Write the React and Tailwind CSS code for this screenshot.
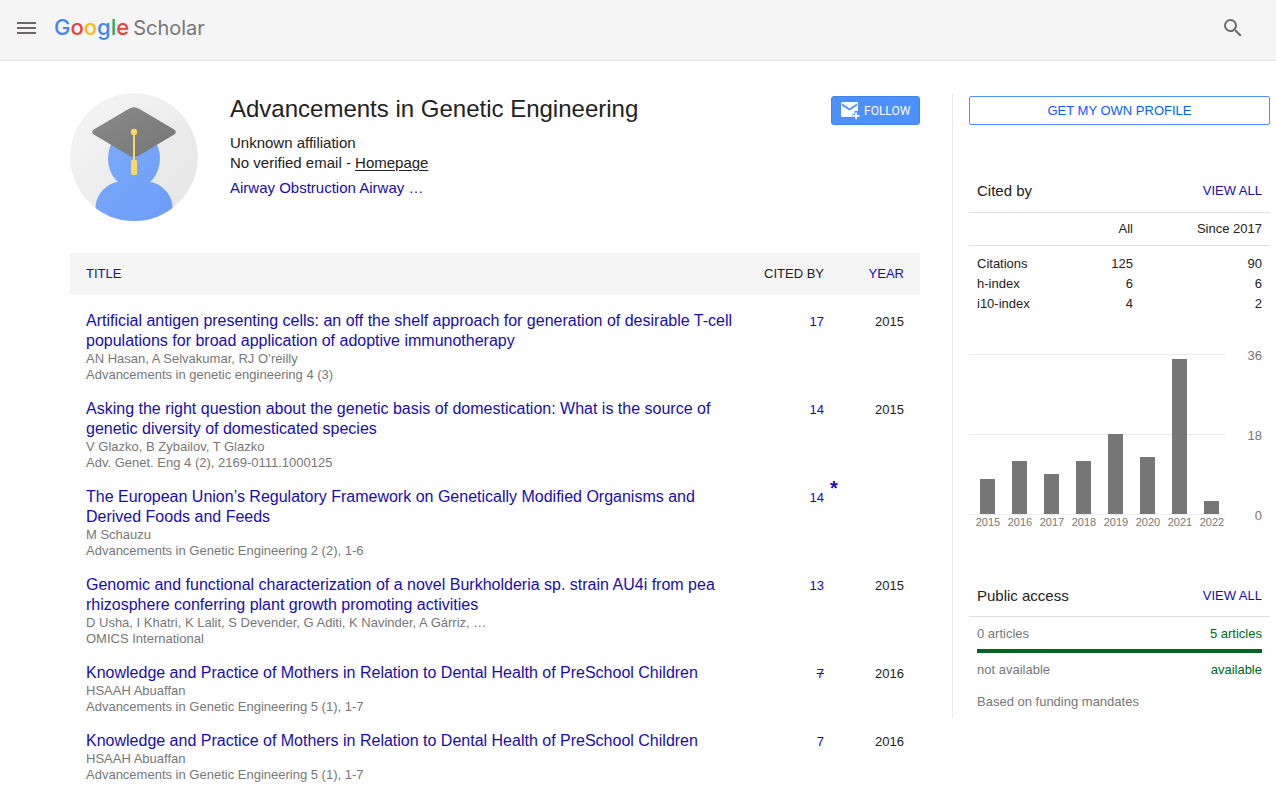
const articles = [
  {
    title: 'Artificial antigen presenting cells: an off the shelf approach for generation of desirable T-cell populations for broad application of adoptive immunotherapy',
    authors: 'AN Hasan, A Selvakumar, RJ O’reilly',
    venue: 'Advancements in genetic engineering 4 (3)',
    cited: 17,
    year: 2015,
  },
  {
    title: 'Asking the right question about the genetic basis of domestication: What is the source of genetic diversity of domesticated species',
    authors: 'V Glazko, B Zybailov, T Glazko',
    venue: 'Adv. Genet. Eng 4 (2), 2169-0111.1000125',
    cited: 14,
    year: 2015,
  },
  {
    title: 'The European Union’s Regulatory Framework on Genetically Modified Organisms and Derived Foods and Feeds',
    authors: 'M Schauzu',
    venue: 'Advancements in Genetic Engineering 2 (2), 1-6',
    cited: 14,
    merged: true,
    year: '',
  },
  {
    title: 'Genomic and functional characterization of a novel Burkholderia sp. strain AU4i from pea rhizosphere conferring plant growth promoting activities',
    authors: 'D Usha, I Khatri, K Lalit, S Devender, G Aditi, K Navinder, A Gárriz, …',
    venue: 'OMICS International',
    cited: 13,
    year: 2015,
  },
  {
    title: 'Knowledge and Practice of Mothers in Relation to Dental Health of PreSchool Children',
    authors: 'HSAAH Abuaffan',
    venue: 'Advancements in Genetic Engineering 5 (1), 1-7',
    cited: 7,
    struck: true,
    year: 2016,
  },
  {
    title: 'Knowledge and Practice of Mothers in Relation to Dental Health of PreSchool Children',
    authors: 'HSAAH Abuaffan',
    venue: 'Advancements in Genetic Engineering 5 (1), 1-7',
    cited: 7,
    year: 2016,
  },
];

const stats = [
  ['Citations', 125, 90],
  ['h-index', 6, 6],
  ['i10-index', 4, 2],
];

const citationsPerYear = [
  [2015, 35],
  [2016, 53],
  [2017, 40],
  [2018, 53],
  [2019, 80],
  [2020, 57],
  [2021, 155],
  [2022, 13],
];

function Header() {
  return (
    <header className="flex h-[61px] items-center border-b border-[#e0e0e0] bg-[#f5f5f5] pb-1 pl-[17px] pr-[31px]">
      <button type="button" aria-label="Menu" className="text-[#6b6667]">
        <svg width="19" height="12" viewBox="0 0 19 12" fill="currentColor" aria-hidden="true">
          <path d="M0 0h19v2H0zM0 5h19v2H0zM0 10h19v2H0z" />
        </svg>
      </button>
      <a
        href="#home"
        aria-label="Google Scholar"
        className="ml-[18px] flex items-baseline gap-1 pb-0.5 font-['Product_Sans',Inter,sans-serif]"
      >
        <span className="text-[22px] font-medium leading-8 text-[#4285f4]">
          G<span className="text-[#ea4335]">o</span>
          <span className="text-[#fbbc05]">o</span>g<span className="text-[#34a853]">l</span>
          <span className="text-[#ea4335]">e</span>
        </span>
        <span className="text-xl leading-8 text-[#777777]">Scholar</span>
      </a>
      <button type="button" aria-label="Search" className="ml-auto text-[#6b6b6b]">
        <svg width="24" height="24" viewBox="0 0 24 24" fill="currentColor" aria-hidden="true">
          <path d="M15.5 14h-.79l-.28-.27A6.47 6.47 0 0 0 16 9.5 6.5 6.5 0 1 0 9.5 16c1.61 0 3.09-.59 4.23-1.57l.27.28v.79l5 4.99L20.49 19l-4.99-5zm-6 0C7.01 14 5 11.99 5 9.5S7.01 5 9.5 5 14 7.01 14 9.5 11.99 14 9.5 14z" />
        </svg>
      </button>
    </header>
  );
}

function Avatar() {
  return (
    <svg width="128" height="128" viewBox="0 0 128 128" className="shrink-0" role="img" aria-label="Profile picture">
      <defs>
        <linearGradient id="disc" x1="0" y1="0" x2="1" y2="1">
          <stop offset="0" stopColor="#f5f5f5" />
          <stop offset="1" stopColor="#e4e4e4" />
        </linearGradient>
        <linearGradient id="body" x1="26" y1="50" x2="102" y2="128" gradientUnits="userSpaceOnUse">
          <stop offset="0" stopColor="#7baaf9" />
          <stop offset="1" stopColor="#6c9df8" />
        </linearGradient>
        <linearGradient id="cap" x1="0" y1="0" x2="1" y2="1">
          <stop offset="0" stopColor="#8b8b8b" />
          <stop offset="1" stopColor="#757575" />
        </linearGradient>
        <clipPath id="round">
          <circle cx="64" cy="64" r="64" />
        </clipPath>
      </defs>
      <g clipPath="url(#round)">
        <circle cx="64" cy="64" r="64" fill="url(#disc)" />
        <ellipse cx="64" cy="65.5" rx="26" ry="30" fill="url(#body)" />
        <path d="M25.500 128V115C25.500 101 37 90 50 88.500H78C91 90 102.500 101 102.500 115v13z" fill="url(#body)" />
        <path
          d="M58.500 16Q64 12.500 69.500 16L104.200 36.400Q107.400 39 104.200 41.600L69.500 62.200Q64 65.500 58.500 62.200L23.800 41.600Q20.600 39 23.800 36.400Z"
          fill="url(#cap)"
        />
        <circle cx="64" cy="39" r="3.200" fill="#fdd663" />
        <path d="M63 40h2v28h-2z" fill="#fdd663" />
        <rect x="61" y="67" width="6" height="15" rx="1.200" fill="#fdd663" />
      </g>
    </svg>
  );
}

function Profile() {
  return (
    <section className="flex items-start">
      <Avatar />
      <div className="ml-8 min-w-0 flex-1 text-[15px] leading-5">
        <h1 className="text-2xl leading-8">Advancements in Genetic Engineering</h1>
        <p className="mt-2">Unknown affiliation</p>
        <p>
          No verified email -{' '}
          <a href="#homepage" className="underline underline-offset-2">Homepage</a>
        </p>
        <p className="mt-[5px]">
          <a href="#topic" className="text-[#1a0dab]">Airway Obstruction Airway …</a>
        </p>
      </div>
      <button
        type="button"
        className="mt-[3px] flex h-[29px] w-[89px] items-center gap-1 rounded-[3px] border border-[#4285e8] bg-[#4d90fe] pl-2 font-[Roboto,sans-serif] text-xs text-white"
      >
        <svg width="20" height="18" viewBox="0 0 20 18" className="shrink-0" aria-hidden="true">
          <path
            d="M2.500 0h14a1.500 1.500 0 0 1 1.500 1.500V9h-3.500v3h-2v3H2.500A1.500 1.500 0 0 1 1 13.500v-12A1.500 1.500 0 0 1 2.500 0z"
            fill="#fff"
          />
          <path d="M2 2.500l7.500 5 7.500-5" fill="none" stroke="#4d90fe" strokeWidth="1.800" />
          <path d="M15.200 10.500h1.800V13h2.500v1.800H17v2.500h-1.800v-2.500h-2.500V13h2.500z" fill="#fff" />
        </svg>
        FOLLOW
      </button>
    </section>
  );
}

function Articles() {
  return (
    <table className="mt-8 w-full text-[13px] leading-5">
      <thead className="bg-[#f5f5f5]">
        <tr className="h-[42px]">
          <th className="pl-4 text-left font-normal"><a href="#title" className="text-[#1a0dab]">TITLE</a></th>
          <th className="w-[98px] pr-4 text-right font-normal">CITED BY</th>
          <th className="w-20 pr-4 text-right font-normal"><a href="#year" className="text-[#1a0dab]">YEAR</a></th>
        </tr>
      </thead>
      <tbody className="before:block before:h-2">
        {articles.map((a, i) => (
          <tr key={i} className="align-baseline">
            <td className="py-2 pl-4">
              <a href="#article" className="block text-base leading-5 text-[#1a0dab]">{a.title}</a>
              <p className="leading-4 text-[#777777]">{a.authors}</p>
              <p className="leading-4 text-[#777777]">{a.venue}</p>
            </td>
            <td className="py-2 pr-4 text-right">
              <a href="#cited" className={a.struck ? 'relative text-[#1a0dab] line-through' : 'relative text-[#1a0dab]'}>
                {a.cited}
                {a.merged && <span className="absolute -top-3 left-full pl-1.5 text-xl font-bold leading-5">*</span>}
              </a>
            </td>
            <td className="py-2 pr-4 text-right">{a.year}</td>
          </tr>
        ))}
      </tbody>
    </table>
  );
}

function CitedBy() {
  return (
    <section className="mt-[45px]">
      <div className="flex h-[42px] items-center justify-between px-2">
        <h2 className="text-[15px]">Cited by</h2>
        <a href="#all-citations" className="text-[13px] text-[#1a0dab]">VIEW ALL</a>
      </div>
      <table className="w-full text-[13px] leading-5">
        <thead>
          <tr className="h-[33px] border-y border-[#e0e0e0]">
            <td />
            <th className="text-right font-normal">All</th>
            <th className="w-[137px] pr-2 text-right font-normal">Since 2017</th>
          </tr>
        </thead>
        <tbody className="before:block before:h-2">
          {stats.map(([name, all, recent]) => (
            <tr key={name}>
              <td className="pl-2">{name}</td>
              <td className="text-right">{all}</td>
              <td className="pr-2 text-right">{recent}</td>
            </tr>
          ))}
        </tbody>
      </table>
    </section>
  );
}

function Chart() {
  return (
    <section className="mt-10 flex justify-between pr-2 text-[#777777]" aria-label="Citations per year">
      <div className="w-64">
        <div className="grid">
          <div className="col-start-1 row-start-1">
            <div className="h-20 border-t border-[#ebebeb]" />
            <div className="h-[81px] border-y border-[#ebebeb]" />
          </div>
          <div className="col-start-1 row-start-1 flex items-end pb-px">
            {citationsPerYear.map(([year, height]) => (
              <div key={year} className="flex w-8 justify-end pr-1.5">
                <div className="w-[15px] bg-[#777777]" style={{ height }} />
              </div>
            ))}
          </div>
        </div>
        <div className="flex pl-[3px] text-[11px] leading-[14px]">
          {citationsPerYear.map(([year]) => (
            <span key={year} className="w-8 shrink-0 text-center">{year}</span>
          ))}
        </div>
      </div>
      <div className="-mt-2 text-right text-[13px] leading-5">
        <p className="h-20">36</p>
        <p className="h-20">18</p>
        <p>0</p>
      </div>
    </section>
  );
}

function PublicAccess() {
  return (
    <section className="mt-[46px] text-[13px] leading-5">
      <div className="flex h-[42px] items-center justify-between border-b border-[#e0e0e0] px-2">
        <h2 className="text-[15px]">Public access</h2>
        <a href="#all-access" className="text-[#1a0dab]">VIEW ALL</a>
      </div>
      <div className="px-2 pt-[7px] text-[#777777]">
        <div className="flex justify-between">
          <span>0 articles</span>
          <span className="text-[#006621]">5 articles</span>
        </div>
        <div className="my-[5px] h-1 bg-[#006621]" />
        <div className="flex justify-between pt-0.5">
          <span>not available</span>
          <span className="text-[#006621]">available</span>
        </div>
        <p className="mt-3 pb-1.5">Based on funding mandates</p>
      </div>
    </section>
  );
}

export default function App() {
  return (
    <div className="min-h-screen bg-white font-['Liberation_Sans',Arial,sans-serif] text-[#222222]">
      <Header />
      <div className="flex items-start gap-8 pl-[70px] pr-1.5 pt-8">
        <main className="min-w-0 flex-1">
          <Profile />
          <Articles />
        </main>
        <aside className="w-[318px] shrink-0 border-l border-[#ebebeb] pl-4 pt-[3px]">
          <button
            type="button"
            className="h-[29px] w-full rounded-[2px] border border-[#4d90fe] text-[13px] text-[#0b5cff]"
          >
            GET MY OWN PROFILE
          </button>
          <CitedBy />
          <Chart />
          <PublicAccess />
        </aside>
      </div>
    </div>
  );
}
